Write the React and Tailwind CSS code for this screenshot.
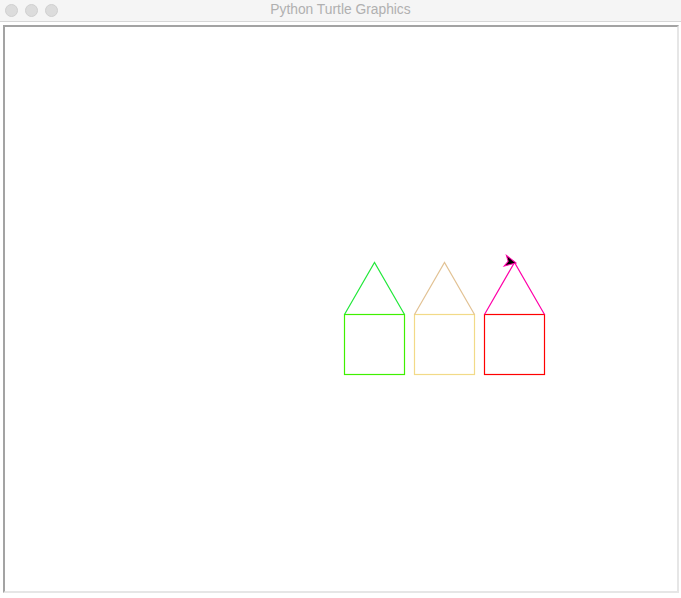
export default function App() {
  const houses = [
    { x: 344, sq: "#3ff000", roof: "#22e83a" },
    { x: 414, sq: "#f2da88", roof: "#e2c294" },
    { x: 484, sq: "#ff0000", roof: "#ff00a8" },
  ];
  return (
    <div className="w-[681px] h-[598px] bg-white overflow-hidden" style={{ fontFamily: '"Liberation Sans", Arial, sans-serif' }}>
      <div className="relative h-[22px] bg-[#f5f5f5] border-b border-[#d6d6d6] flex items-center">
        <div className="flex gap-[7px] pl-[5px]">
          <div className="w-[13px] h-[13px] rounded-full bg-[#dcdcdc] border border-[#d0d0d0]" />
          <div className="w-[13px] h-[13px] rounded-full bg-[#dcdcdc] border border-[#d0d0d0]" />
          <div className="w-[13px] h-[13px] rounded-full bg-[#dcdcdc] border border-[#d0d0d0]" />
        </div>
        <div className="absolute inset-0 flex items-center justify-center text-[13.8px] text-[#b0b0b0] pl-[-1px]">
          Python Turtle Graphics
        </div>
      </div>
      <div className="ml-[3px] mt-[3px] w-[676px] h-[568px] border-2 border-t-[#a3a3a3] border-l-[#a3a3a3] border-r-[#e6e6e6] border-b-[#e6e6e6] bg-white">
        <svg width="672" height="564" viewBox="5 27 672 564" className="block">
          {houses.map((h) => (
            <g key={h.x} fill="none" strokeWidth="1.2">
              <rect x={h.x + 0.5} y={314.5} width="60" height="60" stroke={h.sq} />
              <polyline
                points={`${h.x + 0.5},314.5 ${h.x + 30.5},262.5 ${h.x + 60.5},314.5`}
                stroke={h.roof}
              />
            </g>
          ))}
          <polygon
            points="0,0 -11,-5.5 -8,0 -11,5.5"
            transform="translate(516 263) rotate(12)"
            fill="#000"
            stroke="#ff00a8"
            strokeWidth="1"
          />
        </svg>
      </div>
    </div>
  );
}
